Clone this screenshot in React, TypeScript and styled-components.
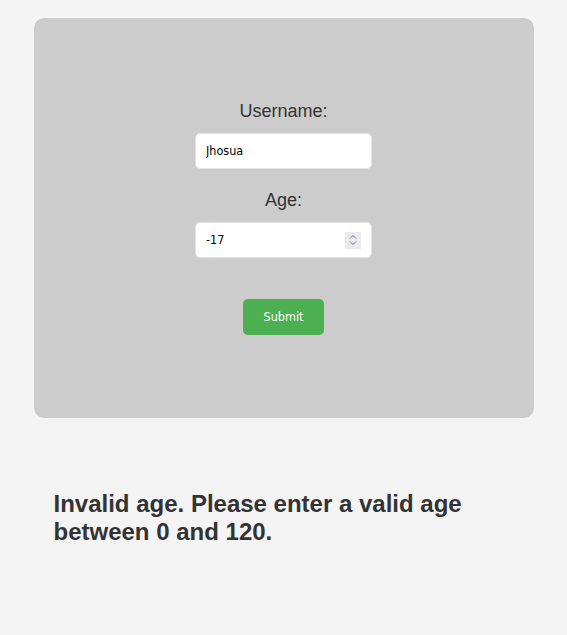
import React, { useState } from "react";
import styled, { createGlobalStyle } from "styled-components";

const GlobalStyle = createGlobalStyle`
  html, body {
    margin: 0;
    padding: 0;
    background: #f4f4f4;
    font-family: "Liberation Sans", Arial, sans-serif;
    color: #333;
  }
  input[type="number"]::-webkit-inner-spin-button,
  input[type="number"]::-webkit-outer-spin-button {
    -webkit-appearance: none;
    margin: 0;
  }
`;

const Page = styled.div`
  width: 500px;
  margin: 18px auto 0;
`;

const Card = styled.form`
  box-sizing: border-box;
  height: 400px;
  padding-bottom: 2px;
  background: #cccccc;
  border-radius: 10px;
  display: flex;
  flex-direction: column;
  align-items: center;
  justify-content: center;
`;

const Label = styled.label`
  display: block;
  font-size: 18px;
  line-height: 21px;
  padding-top: 1px;
  color: #333;
  margin-bottom: 11px;
`;

const Field = styled.div<{ $spaceAfter: number }>`
  position: relative;
  width: 177px;
  height: 36px;
  margin-bottom: ${(p) => p.$spaceAfter}px;
`;

const Input = styled.input`
  box-sizing: border-box;
  display: block;
  width: 177px;
  height: 36px;
  padding: 10px;
  border: 1px solid #e4e4e4;
  border-radius: 5px;
  background: #fff;
  color: #000;
  font-family: "DejaVu Sans Condensed", "DejaVu Sans", sans-serif;
  font-size: 12.5px;
  margin: 0;
  outline: none;
  -moz-appearance: textfield;
`;

const Spinner = styled.div`
  position: absolute;
  right: 11px;
  top: 10px;
  width: 16px;
  height: 17px;
  background: #e9e9ee;
  display: flex;
  flex-direction: column;
  align-items: center;
  justify-content: center;
  gap: 2px;
  pointer-events: none;
`;

const Button = styled.button`
  box-sizing: border-box;
  width: 81px;
  height: 36px;
  border: none;
  border-radius: 5px;
  background: #4caf50;
  color: #fff;
  font-family: "DejaVu Sans Condensed", "DejaVu Sans", sans-serif;
  font-size: 12.5px;
  cursor: pointer;
`;

const Message = styled.p`
  margin: 72px 0 0;
  padding: 0 20px;
  font-size: 24px;
  line-height: 28px;
  font-weight: bold;
  color: #333;
`;

const Chevron = ({ up }: { up?: boolean }) => (
  <svg width="8" height="5" viewBox="0 0 8 5" fill="none">
    <path
      d={up ? "M1 4.5 L4 1.5 L7 4.5" : "M1 0.5 L4 3.5 L7 0.5"}
      stroke="#7a7a80"
      strokeWidth="1"
    />
  </svg>
);

export default function App() {
  const [name, setName] = useState("Jhosua");
  const [age, setAge] = useState("-17");
  return (
    <>
      <GlobalStyle />
      <Page>
        <Card onSubmit={(e) => e.preventDefault()}>
          <Label htmlFor="username">Username:</Label>
          <Field $spaceAfter={20}>
            <Input
              id="username"
              type="text"
              value={name}
              onChange={(e) => setName(e.target.value)}
            />
          </Field>
          <Label htmlFor="age">Age:</Label>
          <Field $spaceAfter={41}>
            <Input
              id="age"
              type="number"
              value={age}
              onChange={(e) => setAge(e.target.value)}
            />
            <Spinner>
              <Chevron up />
              <Chevron />
            </Spinner>
          </Field>
          <Button type="submit">Submit</Button>
        </Card>
        <Message>Invalid age. Please enter a valid age between 0 and 120.</Message>
      </Page>
    </>
  );
}
